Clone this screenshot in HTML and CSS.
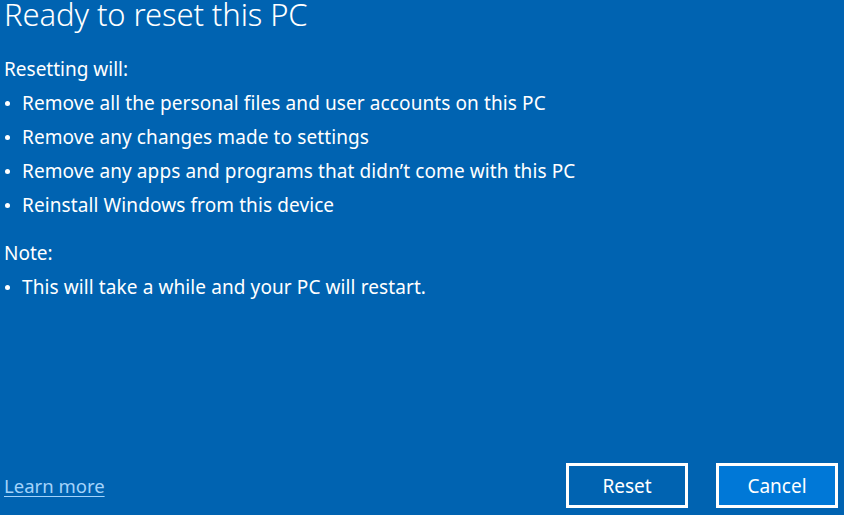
FILE: index.html
```html
<!DOCTYPE html>
<html lang="en">
<head>
<meta charset="utf-8">
<title>Ready to reset this PC</title>
<link rel="stylesheet" href="styles.css">
</head>
<body>
<main class="dialog">
  <h1 class="title">Ready to reset this PC</h1>
  <section class="content">
    <p class="label">Resetting will:</p>
    <ul class="list">
      <li>Remove all the personal files and user accounts on this PC</li>
      <li>Remove any changes made to settings</li>
      <li>Remove any apps and programs that didn’t come with this PC</li>
      <li>Reinstall Windows from this device</li>
    </ul>
    <p class="label note">Note:</p>
    <ul class="list">
      <li>This will take a while and your PC will restart.</li>
    </ul>
  </section>
  <footer class="footer">
    <a class="link" href="#">Learn more</a>
    <div class="buttons">
      <button class="btn">Reset</button>
      <button class="btn primary">Cancel</button>
    </div>
  </footer>
</main>
</body>
</html>
```
FILE: styles.css
```css
html, body {
  margin: 0;
  padding: 0;
  height: 100%;
}
body {
  background: #0063b1;
  color: #ffffff;
  font-family: "Noto Sans", "Open Sans", sans-serif;
  overflow: hidden;
}
.dialog {
  height: 515px;
  display: flex;
  flex-direction: column;
  padding: 0 6px 0 4px;
  box-sizing: border-box;
}
.title {
  margin: 0;
  font-size: 31px;
  font-weight: 300;
  line-height: 28px;
  letter-spacing: -0.1px;
}
.content {
  flex: 1;
  margin-top: 24px;
}
.label {
  margin: 0;
  font-size: 19px;
  line-height: 34px;
}
.note {
  margin-top: 14px;
}
.list {
  list-style: none;
  margin: 0;
  padding: 0;
}
.list li {
  position: relative;
  padding-left: 18px;
  font-size: 19px;
  line-height: 34px;
  letter-spacing: 0.1px;
}
.list li::before {
  content: "";
  position: absolute;
  left: 1px;
  top: 15px;
  width: 5px;
  height: 5px;
  border-radius: 50%;
  background: #ffffff;
}
.footer {
  display: flex;
  justify-content: space-between;
  align-items: center;
  padding-bottom: 7px;
}
.link {
  color: #a3d3fb;
  font-size: 18.5px;
  text-decoration: underline;
  text-underline-offset: 3px;
}
.buttons {
  display: flex;
  gap: 28px;
}
.btn {
  width: 122px;
  height: 45px;
  border: 3px solid #ffffff;
  background: #0063b1;
  color: #ffffff;
  font-family: inherit;
  font-size: 19px;
  padding: 0;
}
.btn.primary {
  background: #0078d7;
}
```
